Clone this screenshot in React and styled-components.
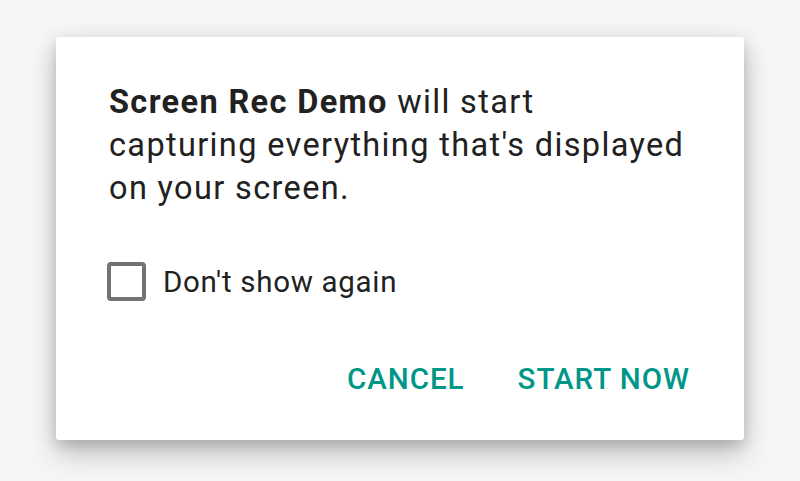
import React, { useState } from "react";
import styled, { createGlobalStyle } from "styled-components";

const GlobalStyle = createGlobalStyle`
  html, body {
    margin: 0;
    padding: 0;
    background: #f6f6f6;
    font-family: Roboto, "Noto Sans", "Liberation Sans", sans-serif;
  }
`;

const Page = styled.div`
  width: 800px;
  height: 481px;
  box-sizing: border-box;
  padding: 37px 56px 0;
`;

const Dialog = styled.div`
  width: 688px;
  height: 403px;
  box-sizing: border-box;
  background: #fff;
  border-radius: 3px;
  box-shadow: 0 14px 28px rgba(0, 0, 0, 0.22), 0 6px 12px rgba(0, 0, 0, 0.1),
    0 0 24px rgba(0, 0, 0, 0.06);
  padding: 44px 54px 0 53px;
  display: flex;
  flex-direction: column;
`;

const Message = styled.p`
  margin: 0;
  font-size: 32.5px;
  line-height: 43px;
  letter-spacing: 1.35px;
  color: #212121;
  white-space: nowrap;

  b {
    font-weight: 700;
  }
`;

const CheckRow = styled.label`
  display: flex;
  align-items: center;
  gap: 17px;
  margin-top: 52px;
  margin-left: -2px;
  cursor: pointer;
`;

const Box = styled.span`
  width: 39px;
  height: 39px;
  box-sizing: border-box;
  border: 4px solid ${(p) => (p.$checked ? "#009688" : "#737373")};
  border-radius: 4px;
  background: ${(p) => (p.$checked ? "#009688" : "transparent")};
`;

const CheckLabel = styled.span`
  font-size: 29.5px;
  letter-spacing: 0.7px;
  color: #212121;
`;

const Actions = styled.div`
  display: flex;
  justify-content: flex-end;
  gap: 53px;
  margin-top: 61px;
`;

const TextButton = styled.button`
  border: 0;
  background: none;
  padding: 0;
  font-family: inherit;
  font-size: 29.5px;
  font-weight: 500;
  letter-spacing: 1px;
  color: #009688;
  cursor: pointer;
`;

export default function App() {
  const [checked, setChecked] = useState(false);
  return (
    <>
      <GlobalStyle />
      <Page>
        <Dialog>
          <Message>
            <b>Screen Rec Demo</b> will start
            <br />
            capturing everything that's displayed
            <br />
            on your screen.
          </Message>
          <CheckRow onClick={() => setChecked(!checked)}>
            <Box $checked={checked} />
            <CheckLabel>Don't show again</CheckLabel>
          </CheckRow>
          <Actions>
            <TextButton>CANCEL</TextButton>
            <TextButton>START NOW</TextButton>
          </Actions>
        </Dialog>
      </Page>
    </>
  );
}
